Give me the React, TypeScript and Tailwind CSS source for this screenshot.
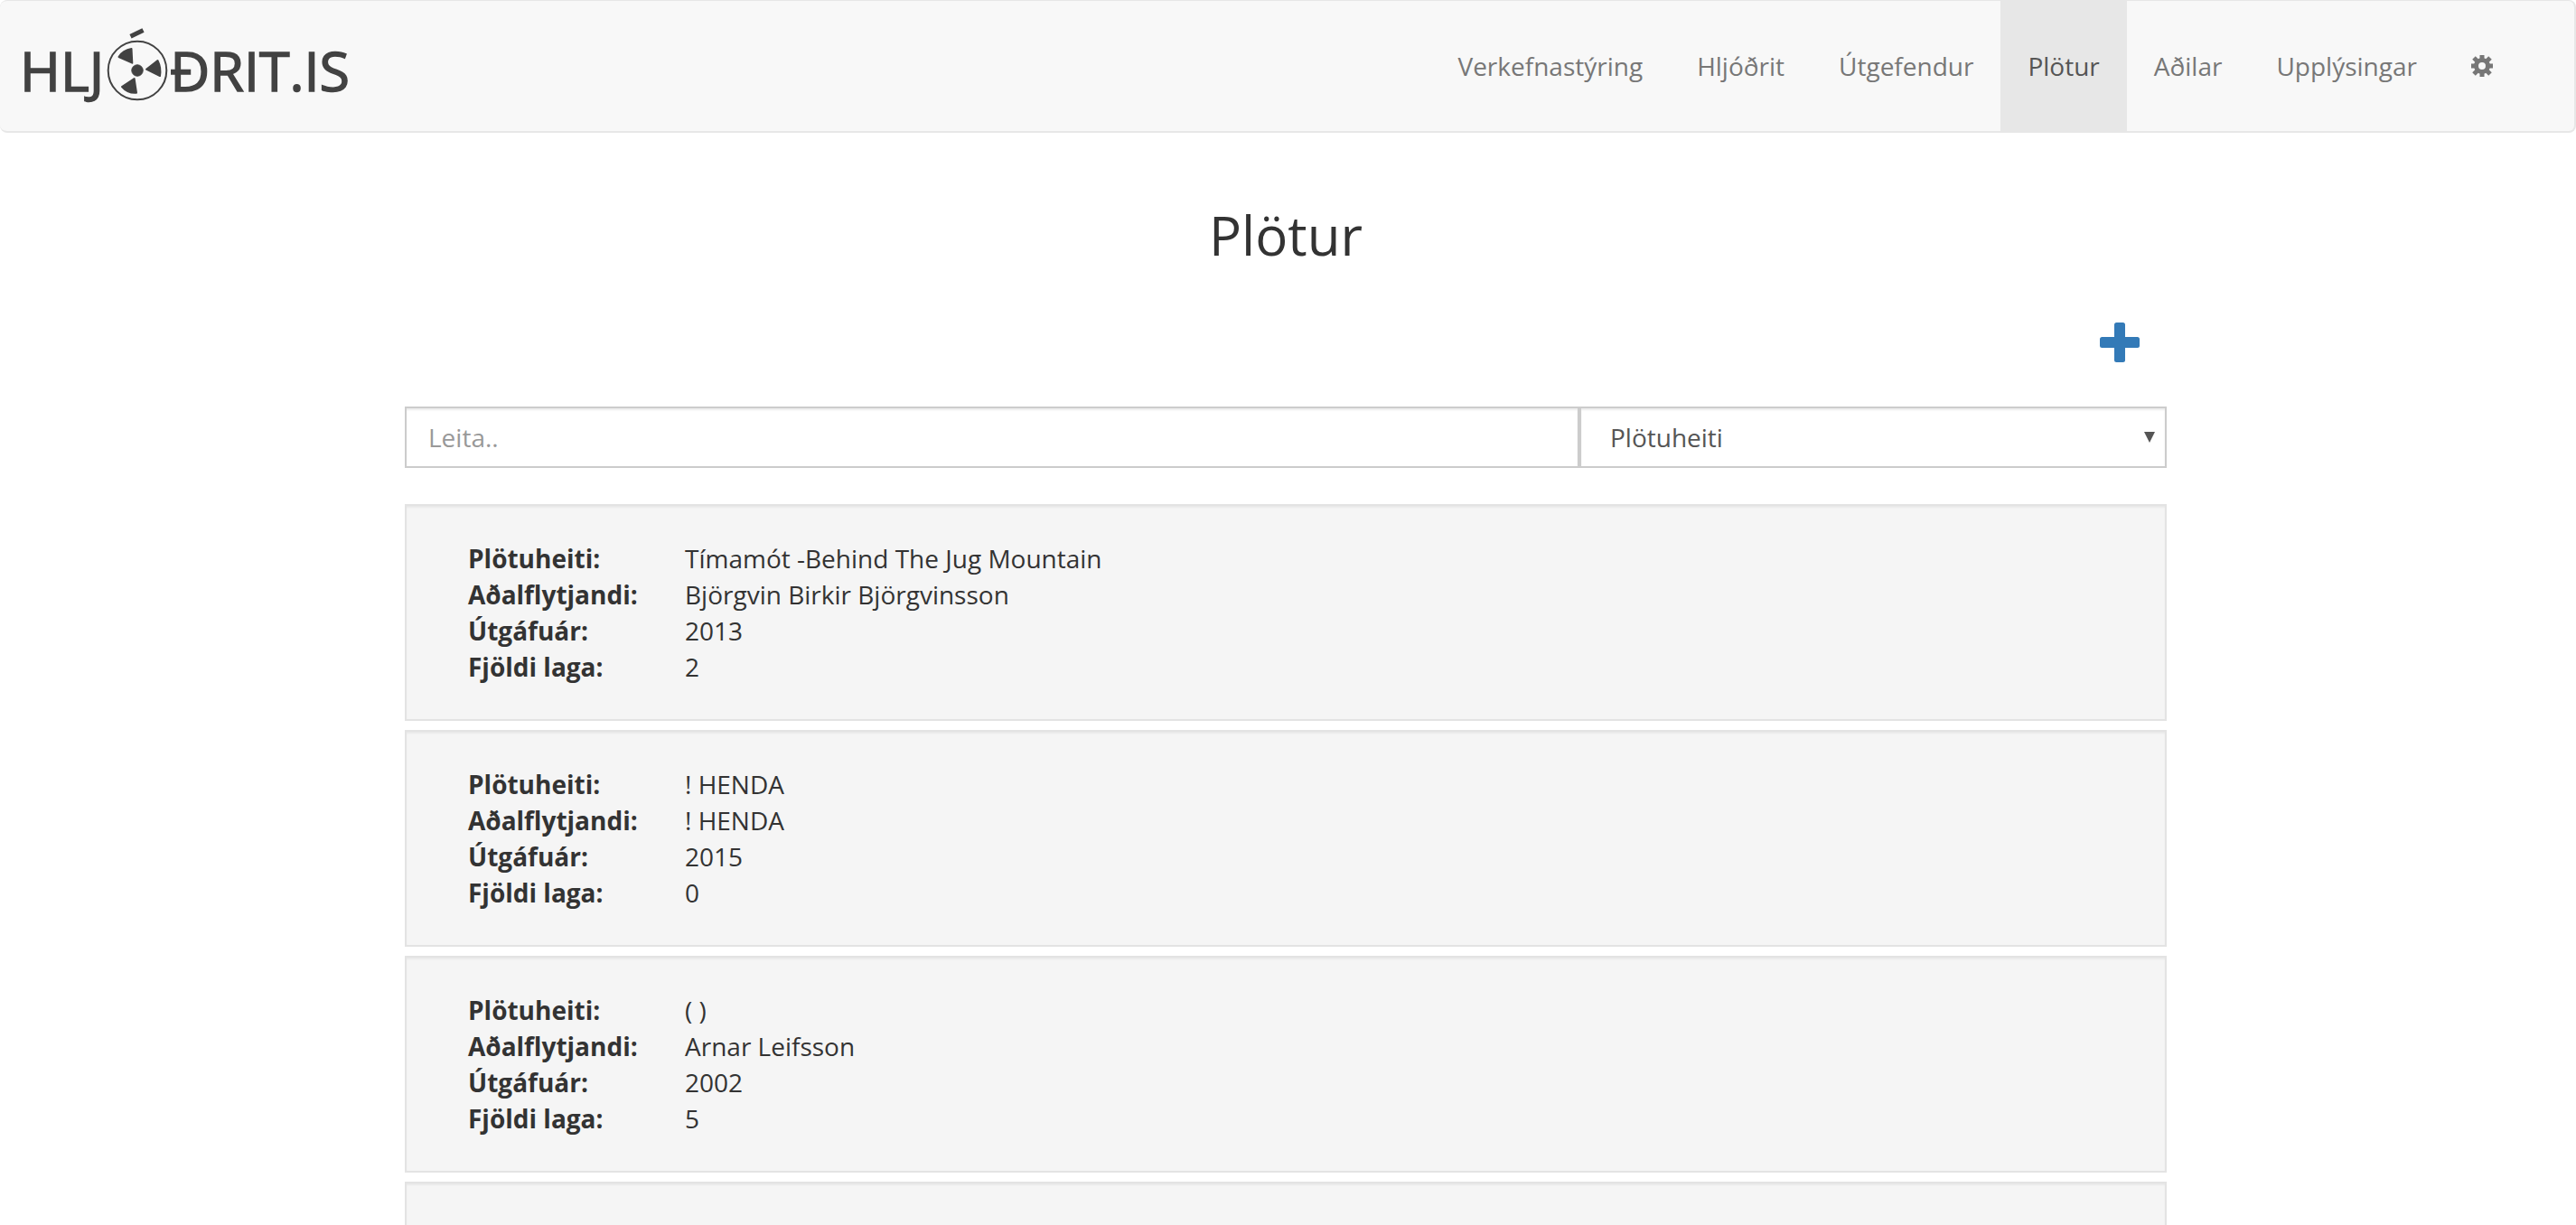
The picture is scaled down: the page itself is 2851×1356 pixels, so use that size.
import React from 'react';

const navItems = ['Verkefnastýring', 'Hljóðrit', 'Útgefendur', 'Plötur', 'Aðilar', 'Upplýsingar'];
const activeItem = 'Plötur';

const albums = [
  { title: 'Tímamót -Behind The Jug Mountain', artist: 'Björgvin Birkir Björgvinsson', year: '2013', songs: '2' },
  { title: '! HENDA', artist: '! HENDA', year: '2015', songs: '0' },
  { title: '( )', artist: 'Arnar Leifsson', year: '2002', songs: '5' },
];

function Logo() {
  return (
    <svg viewBox="16 28 376 90" className="h-[90px] w-[376px]" fill="#424242" stroke="#424242" fontSize="61">
      <text x="22" y="101" strokeWidth="1.500">HLJ</text>
      <circle cx="152" cy="78" r="32.3" fill="none" strokeWidth="2" />
      <path d="M144.500 40.200L158.500 33.500" strokeWidth="5" />
      <circle cx="152" cy="78" r="6.200" />
      <g strokeWidth="2" strokeLinejoin="round">
        <path d="M162 76.700L174.500 67Q178.500 75 177 84Z" />
        <path d="M131.500 63Q136 55.500 145.500 54L146.300 69.700Z" />
        <path d="M148.600 87L151 102.700Q141.500 103.500 135 96Z" />
      </g>
      <text x="188" y="101" strokeWidth="1.500">ÐRIT.IS</text>
    </svg>
  );
}

function GearIcon() {
  return (
    <svg viewBox="-12 -12 24 24" className="size-6" fill="none" stroke="#777">
      <circle r="6.500" strokeWidth="5" />
      <path d="M0-12V-7M0 7V12M-12 0H-7M7 0H12" strokeWidth="5" />
      <path d="M-9-9L-5-5M9-9L5-5M-9 9L-5 5M9 9L5 5" strokeWidth="5" />
    </svg>
  );
}

function PlusIcon() {
  return (
    <svg viewBox="0 0 44 44" className="size-11" fill="#337ab7">
      <rect x="16" width="12" height="44" rx="2.500" />
      <rect y="16" width="44" height="12" rx="2.500" />
    </svg>
  );
}

function Row({ label, value }: { label: string; value: string }) {
  return (
    <div className="flex">
      <dt className="w-60 font-bold">{label}</dt>
      <dd>{value}</dd>
    </div>
  );
}

export default function App() {
  return (
    <div className="bg-white font-['Open_Sans',sans-serif] text-[28px] leading-10 text-[#333]">
      <nav className="flex items-stretch justify-between rounded-lg border-t border-r-2 border-b-2 border-[#e7e7e7] bg-[#f8f8f8] pr-[60px] pl-4">
        <a href="#" aria-label="Hljóðrit.is" className="flex items-center">
          <Logo />
        </a>
        <ul className="flex">
          {navItems.map((item) => (
            <li key={item}>
              <a
                href="#"
                aria-current={item === activeItem ? 'page' : undefined}
                className={
                  item === activeItem
                    ? 'block bg-[#e7e7e7] px-[30px] py-[52px] text-[#555]'
                    : 'block px-[30px] py-[52px] text-[#777]'
                }
              >
                {item}
              </a>
            </li>
          ))}
          <li className="flex">
            <a href="#" aria-label="Stillingar" className="flex items-center px-[30px]">
              <GearIcon />
            </a>
          </li>
        </ul>
      </nav>

      <div className="pr-[5px]">
        <main className="mx-auto w-full max-w-[1950px] pt-20">
          <h1 className="text-center text-[60px] leading-[66px]">Plötur</h1>

          <div className="mt-16 flex justify-end pr-[30px]">
            <button type="button" aria-label="Bæta við plötu">
              <PlusIcon />
            </button>
          </div>

          <form className="mt-[49px] flex h-[68px]">
            <input
              type="text"
              aria-label="Leita"
              placeholder="Leita.."
              className="w-2/3 border-2 border-[#ccc] bg-white px-6 text-[#555] shadow-[inset_0_2px_2px_rgba(0,0,0,0.075)] outline-none placeholder:text-[#999]"
            />
            <div className="relative w-1/3">
              <select
                aria-label="Leita eftir"
                className="size-full appearance-none border-2 border-[#ccc] bg-white px-8 text-[#555] shadow-[inset_0_2px_2px_rgba(0,0,0,0.075)] outline-none"
              >
                <option>Plötuheiti</option>
                <option>Aðalflytjandi</option>
                <option>Útgáfuár</option>
              </select>
              <svg viewBox="0 0 12 12" className="pointer-events-none absolute top-7 right-[13px] size-3" fill="#555">
                <path d="M0 0H12L6 12Z" />
              </svg>
            </div>
          </form>

          <ul className="mt-10 flex flex-col gap-2.5">
            {albums.map((album) => (
              <li
                key={album.title}
                className="border-2 border-[#e3e3e3] bg-[#f5f5f5] px-[68px] py-[38px] shadow-[inset_0_2px_2px_rgba(0,0,0,0.05)]"
              >
                <dl>
                  <Row label="Plötuheiti:" value={album.title} />
                  <Row label="Aðalflytjandi:" value={album.artist} />
                  <Row label="Útgáfuár:" value={album.year} />
                  <Row label="Fjöldi laga:" value={album.songs} />
                </dl>
              </li>
            ))}
            <li
              aria-hidden="true"
              className="h-12 border-2 border-b-0 border-[#e3e3e3] bg-[#f5f5f5] shadow-[inset_0_2px_2px_rgba(0,0,0,0.05)]"
            />
          </ul>
        </main>
      </div>
    </div>
  );
}
